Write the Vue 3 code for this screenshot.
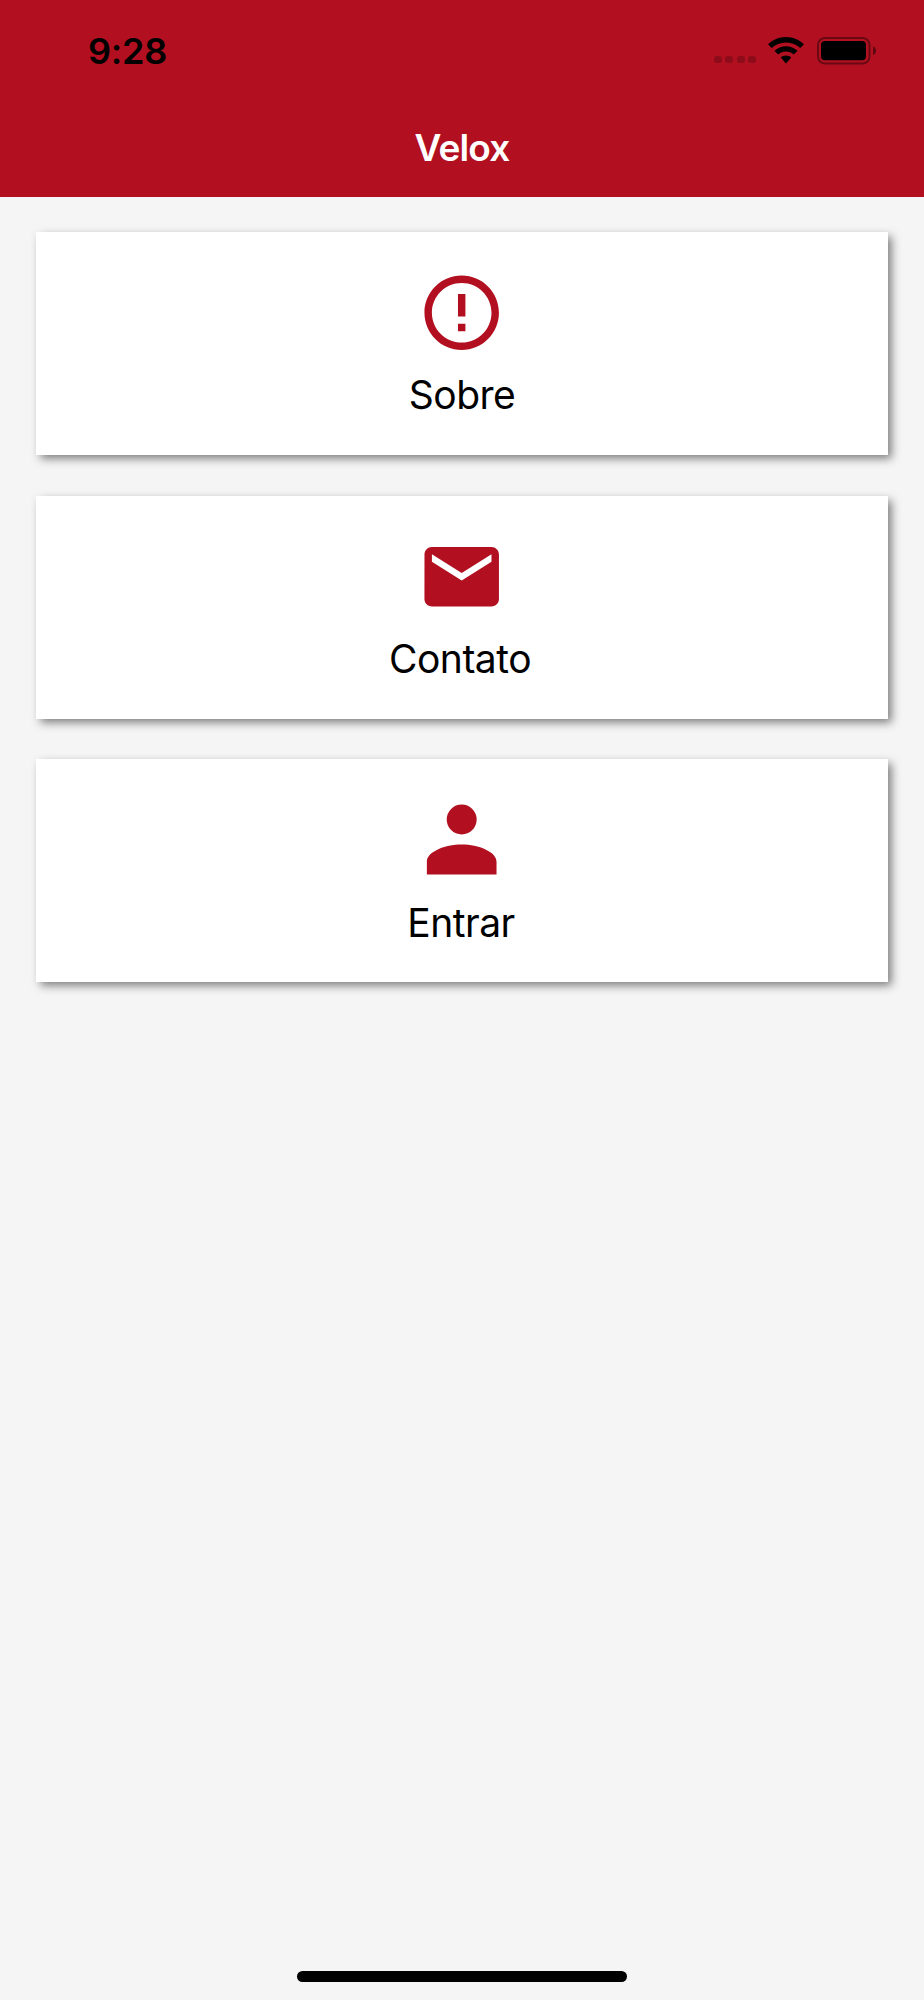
<template>
  <div class="screen">
    <header class="header">
      <!-- Status bar -->
      <div class="status-bar">
        <span class="clock">9:28</span>
        <div class="status-icons">
          <div class="signal">
            <span v-for="n in 4" :key="n" class="signal-dot"></span>
          </div>
          <svg class="wifi" viewBox="0 0 36 27" width="36" height="27">
            <path d="M18 0C11 0 4.7 2.8 0 7.3L3.7 11.1C7.4 7.5 12.4 5.4 18 5.4S28.6 7.5 32.3 11.1L36 7.3C31.3 2.8 25 0 18 0Z" />
            <path d="M18 9.2C13.6 9.2 9.5 10.9 6.4 13.8L10.2 17.6C12.3 15.7 15 14.6 18 14.6S23.7 15.7 25.8 17.6L29.6 13.8C26.5 10.9 22.4 9.2 18 9.2Z" />
            <path d="M18 18.6C16 18.6 14.2 19.3 12.8 20.5L18 26.5L23.2 20.5C21.8 19.3 20 18.6 18 18.6Z" />
          </svg>
          <svg class="battery" viewBox="0 0 60 28" width="60" height="28">
            <rect x="1" y="1" width="51.5" height="25.5" rx="7" fill="none" stroke="#000" stroke-opacity="0.4" stroke-width="2" />
            <rect x="4" y="4" width="45" height="19.2" rx="4" />
            <path d="M56 9.5C58 10 59 11.8 59 13.8S58 17.6 56 18.1Z" fill-opacity="0.45" />
          </svg>
        </div>
      </div>
      <h1 class="title">Velox</h1>
    </header>

    <main class="menu">
      <button v-for="item in items" :key="item.label" class="card">
        <svg class="card-icon" viewBox="0 0 24 24">
          <path :d="item.icon" />
        </svg>
        <span class="card-label" :class="item.name">{{ item.label }}</span>
      </button>
    </main>

    <div class="home-indicator"></div>
  </div>
</template>

<script setup>
// Menu entries
const items = [
  {
    name: 'about',
    label: 'Sobre',
    icon: 'M11 15h2v2h-2zm0-8h2v6h-2zm.99-5C6.47 2 2 6.48 2 12s4.47 10 9.99 10C17.52 22 22 17.52 22 12S17.52 2 11.99 2zM12 20c-4.42 0-8-3.58-8-8s3.58-8 8-8 8 3.58 8 8-3.58 8-8 8z'
  },
  {
    name: 'contact',
    label: 'Contato',
    icon: 'M20 4H4c-1.1 0-1.99.9-1.99 2L2 18c0 1.1.9 2 2 2h16c1.1 0 2-.9 2-2V6c0-1.1-.9-2-2-2zm0 4l-8 5-8-5V6l8 5 8-5z'
  },
  {
    name: 'login',
    label: 'Entrar',
    icon: 'M12 2.55a4.02 4.02 0 1 1 0 8.04a4.02 4.02 0 1 1 0-8.04zM12 13.3C16.6 13.3 21.35 15.3 21.35 17.9V21.35H2.65V17.9C2.65 15.3 7.4 13.3 12 13.3z'
  }
]
</script>

<style>
body {
  margin: 0;
  background: #f5f5f5;
}
</style>

<style scoped>
.screen {
  box-sizing: border-box;
  display: flex;
  flex-direction: column;
  width: 924px;
  height: 2000px;
  padding-bottom: 18px;
  background: #f5f5f5;
  font-family: Inter, "Liberation Sans", sans-serif;
}

.header {
  height: 196.6px;
  background: #b21020;
}

.status-bar {
  display: flex;
  justify-content: space-between;
  height: 101px;
  padding: 0 47px 0 88px;
  box-sizing: border-box;
}

.clock {
  margin-top: 28px;
  font-size: 36px;
  line-height: 46px;
  font-weight: 600;
  letter-spacing: -0.2px;
}

.status-icons {
  display: flex;
  align-items: flex-start;
  padding-top: 37px;
}

.signal {
  display: flex;
  gap: 3.3px;
  margin: 18.7px 12px 0 0;
}

.signal-dot {
  width: 8px;
  height: 7.6px;
  border-radius: 2.5px;
  background: rgba(0, 0, 0, 0.2);
}

.wifi {
  margin-right: 13px;
}

.title {
  margin: 0;
  color: #fff;
  font-size: 37px;
  line-height: 93px;
  font-weight: 600;
  letter-spacing: -0.8px;
  text-align: center;
}

.menu {
  display: flex;
  flex-direction: column;
  gap: 40.4px;
  padding: 35.4px 36px;
}

.card {
  box-sizing: border-box;
  display: flex;
  flex-direction: column;
  align-items: center;
  height: 223.2px;
  padding: 36px 0 0;
  border: none;
  background: #fff;
  box-shadow: 3.5px 3.5px 9px rgba(0, 0, 0, 0.5);
  color: #000;
  font-family: inherit;
  cursor: pointer;
}

.card-icon {
  width: 89.4px;
  height: 89.4px;
  fill: #b21020;
}

.card-label {
  margin-top: 13px;
  font-size: 39px;
  line-height: 50px;
  font-weight: 400;
  letter-spacing: -0.5px;
}

.contact {
  margin-right: 4px;
}

.login {
  margin-right: 2px;
}

.home-indicator {
  width: 330px;
  height: 11px;
  margin: auto auto 0;
  border-radius: 6px;
  background: #000;
}
</style>
